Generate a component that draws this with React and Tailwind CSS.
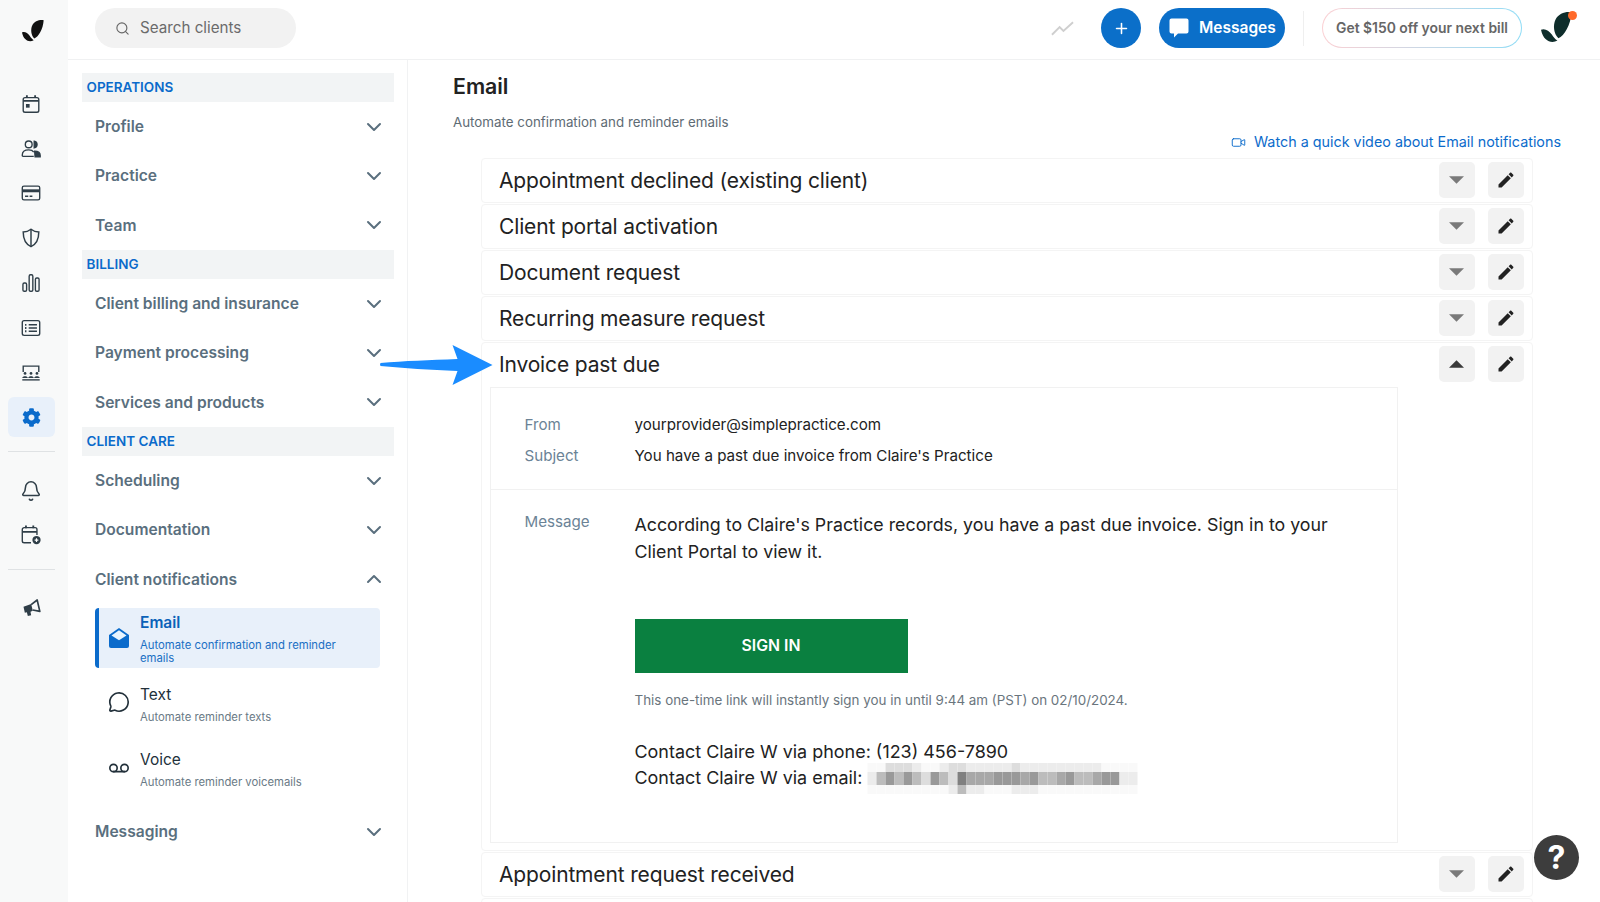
import React from "react";
import { ChevronDown, ChevronUp, Search, Bell, Video, MessageCircle, Voicemail, Plus } from "lucide-react";
import { FaCog } from "react-icons/fa";

const Logo = ({ className, fill = "#111" }) => (
  <svg viewBox="25 20 66 68" className={className}>
    <path fill={fill} d="M90 23C80 20 62 25 56 38C50 50 52 68 62 78C75 72 88 50 90 23Z" />
    <path fill={fill} d="M25 60C33 56 42 62 48 70C52 76 55 80 60 83C48 90 30 85 25 60Z" />
  </svg>
);

const ic = "w-[22px] h-[22px] text-[#2f3e48]";
const RailIcons = {
  cal: (
    <svg viewBox="0 0 24 24" className={ic} fill="none" stroke="currentColor" strokeWidth="1.5">
      <rect x="3.5" y="5" width="17" height="16" rx="2" />
      <path d="M3.5 8.5h17M7.5 2.5v3M16.5 2.5v3" strokeWidth="2" />
      <rect x="6.5" y="12" width="4" height="4" fill="currentColor" stroke="none" />
    </svg>
  ),
  people: (
    <svg viewBox="0 0 24 24" className={ic} fill="none" stroke="currentColor" strokeWidth="1.5">
      <circle cx="9.5" cy="7" r="3.7" />
      <path d="M2.5 20v-1.5C2.500 15 5 13 9.500 13c2.500 0 4.500.8 5.500 2.300M2.500 20H15" />
      <path d="M15.500 3.500a3.700 3.700 0 0 1 0 7.300z" fill="currentColor" />
      <path d="M16 14.500c3.500 0 6 1.500 6 4.500v1.500h-5.500z" fill="currentColor" />
    </svg>
  ),
  card: (
    <svg viewBox="0 0 24 24" className={ic} fill="none" stroke="currentColor" strokeWidth="1.5">
      <rect x="2.500" y="4.500" width="19" height="15" rx="1.800" />
      <rect x="3" y="8" width="18" height="3.200" fill="currentColor" stroke="none" />
      <path d="M5.500 15.500h3.500M10.500 15.500h3" />
    </svg>
  ),
  shield: (
    <svg viewBox="0 0 24 24" className={ic} fill="none" stroke="currentColor" strokeWidth="1.6">
      <path d="M12 2.500C9.500 4.500 6.500 5.500 3.500 5.500C3.500 13 5.500 18.500 12 21.500C18.500 18.500 20.500 13 20.500 5.500C17.500 5.500 14.500 4.500 12 2.500Z" />
      <path d="M12 3v18" />
    </svg>
  ),
  chart: (
    <svg viewBox="0 0 24 24" className={ic} fill="none" stroke="currentColor" strokeWidth="1.5">
      <rect x="3.200" y="12" width="4" height="9" rx="1.500" />
      <rect x="10" y="3" width="4" height="18" rx="1.500" />
      <rect x="16.800" y="6.500" width="4" height="14.500" rx="1.500" />
    </svg>
  ),
  list: (
    <svg viewBox="0 0 24 24" className={ic} fill="none" stroke="currentColor" strokeWidth="1.5">
      <rect x="2.500" y="4" width="19" height="16" rx="2" />
      <path d="M9.500 8.500h9M9.500 12h9M9.500 15.500h9" />
      <path d="M5.500 8.500h1.500M5.500 12h1.500M5.500 15.500h1.500" strokeWidth="2" />
    </svg>
  ),
  room: (
    <svg viewBox="0 0 24 24" className={ic} fill="none" stroke="currentColor" strokeWidth="1.5">
      <path d="M3.500 11V4.500h17V11" />
      <circle cx="5.500" cy="12.500" r="1.500" fill="currentColor" stroke="none" />
      <circle cx="12" cy="12.500" r="1.500" fill="currentColor" stroke="none" />
      <circle cx="18.500" cy="12.500" r="1.500" fill="currentColor" stroke="none" />
      <path d="M2.500 17.500c0-2.500 6-2.500 6 0zM9 17.500c0-2.500 6-2.500 6 0zM15.500 17.500c0-2.500 6-2.500 6 0z" fill="currentColor" stroke="none" />
      <path d="M2.500 19.500h19" />
    </svg>
  ),
  bell: <Bell className={ic} strokeWidth={1.7} />,
  calplus: (
    <svg viewBox="0 0 24 24" className={ic} fill="none" stroke="currentColor" strokeWidth="1.5">
      <path d="M12 20.500H4.500a2 2 0 0 1-2-2V6a2 2 0 0 1 2-2h12a2 2 0 0 1 2 2v6" />
      <path d="M2.500 8.500h16M6.500 1.500v3M14.500 1.500v3" strokeWidth="2" />
      <circle cx="18" cy="17.500" r="4.500" fill="currentColor" stroke="none" />
      <path d="M18 15.500v4M16 17.500h4" stroke="#fff" strokeWidth="1.300" />
    </svg>
  ),
};

const Rail = () => {
  const Item = ({ k, mt }) => (
    <div className="flex items-center justify-center h-[40px] w-[47px]" style={{ marginTop: mt }}>
      {RailIcons[k]}
    </div>
  );
  return (
    <aside className="w-[68px] shrink-0 bg-[#f8f9f9] flex flex-col items-center h-full pr-[6px]">
      <Logo className="w-[22px] h-[23px] mt-[19px] ml-[4px]" />
      <Item k="cal" mt={42} />
      <Item k="people" mt={5} />
      <Item k="card" mt={4} />
      <Item k="shield" mt={5} />
      <Item k="chart" mt={5} />
      <Item k="list" mt={5} />
      <Item k="room" mt={5} />
      <div className="mt-[4px] w-[47px] h-[40px] rounded-md bg-[#e8f0fa] flex items-center justify-center">
        <FaCog className="w-[19px] h-[19px] text-[#0b6bcb]" />
      </div>
      <div className="mt-[14px] w-[47px] h-px bg-[#dfe2e4]" />
      <Item k="bell" mt={19} />
      <Item k="calplus" mt={4} />
      <div className="mt-[14px] w-[47px] h-px bg-[#dfe2e4]" />
      <div className="mt-[18px] h-[40px] flex items-center">
        <svg viewBox="20 24 62 60" className="w-[21px] h-[20px]">
          <path fill="#2f3e48" d="M27 50L50 42L55 62L48 65L50 76L40 78L37 67L31 68Z" />
          <path fill="none" stroke="#2f3e48" strokeWidth="5" strokeLinejoin="round" d="M50 44L68 30L76 64L55 60" />
        </svg>
      </div>
    </aside>
  );
};

const TopBar = () => (
  <header className="h-[60px] shrink-0 border-b border-[#f0f1f2] flex items-center pl-[27px] pr-[23px] pb-[3px] bg-white">
    <div className="w-[201px] h-[40px] rounded-full bg-[#f2f2f2] flex items-center pl-[20px]">
      <Search className="w-[15px] h-[15px] text-[#666]" strokeWidth={1.8} />
      <span className="ml-[10px] text-[15.2px] text-[#6b6b6b]">Search clients</span>
    </div>
    <div className="ml-auto flex items-center">
      <svg viewBox="0 0 24 15" className="w-[23px] h-[15px] mr-[27px]" fill="none" stroke="#cfcfcf" strokeWidth="2">
        <path d="M1 14L9 6L13 10L23 1" />
      </svg>
      <div className="w-[40px] h-[40px] rounded-full bg-[#0b6fc9] flex items-center justify-center">
        <Plus className="w-[17px] h-[17px] text-white" strokeWidth={2.2} />
      </div>
      <div className="ml-[18px] w-[126px] h-[40px] rounded-full bg-[#0b6fc9] flex items-center pl-[10px]">
        <svg viewBox="0 0 20 20" className="w-[20px] h-[20px]" fill="#fff">
          <path d="M2.500 0.500h15a2 2 0 0 1 2 2v11a2 2 0 0 1-2 2H9l-4 4v-4H2.500a2 2 0 0 1-2-2v-11a2 2 0 0 1 2-2z" />
        </svg>
        <span className="ml-[10px] text-[15.5px] font-semibold text-white">Messages</span>
      </div>
      <div className="ml-[18px] w-px h-[35px] bg-[#efefef]" />
      <div className="ml-[18px] w-[200px] h-[40px] rounded-full p-px bg-gradient-to-r from-[#fbd0d3] to-[#8edcf6]">
        <div className="w-full h-full rounded-full bg-white flex items-center justify-center text-[13.9px] font-semibold text-[#666]">
          Get $150 off your next bill
        </div>
      </div>
      <div className="relative ml-[19px] w-[36px] h-[34px]">
        <Logo className="w-[31px] h-[32px]" fill="#0f2e2c" />
        <span className="absolute top-0 right-0 w-[9px] h-[9px] rounded-full bg-[#ff6a2b]" />
      </div>
    </div>
  </header>
);

const NavRow = ({ label, open }) => (
  <div className="h-[49.33px] pl-[13px] pr-[8px] flex items-center justify-between">
    <span className="text-[15.6px] font-semibold text-[#5a6f7e]">{label}</span>
    {open ? (
      <ChevronUp className="w-[24px] h-[24px] text-[#5a6f7e]" strokeWidth={2} />
    ) : (
      <ChevronDown className="w-[24px] h-[24px] text-[#5a6f7e]" strokeWidth={2} />
    )}
  </div>
);

const SectionHead = ({ children }) => (
  <div className="h-[29px] bg-[#f2f4f5] pl-[4.5px] flex items-center text-[13.5px] font-semibold text-[#0b6bcb]">
    {children}
  </div>
);

const Sidebar = () => (
  <nav className="w-[340px] shrink-0 border-r border-[#f1f2f3] pt-[13px] pl-[14px] pr-[13px] h-full">
    <SectionHead>OPERATIONS</SectionHead>
    <NavRow label="Profile" />
    <NavRow label="Practice" />
    <NavRow label="Team" />
    <SectionHead>BILLING</SectionHead>
    <NavRow label="Client billing and insurance" />
    <NavRow label="Payment processing" />
    <NavRow label="Services and products" />
    <SectionHead>CLIENT CARE</SectionHead>
    <NavRow label="Scheduling" />
    <NavRow label="Documentation" />
    <NavRow label="Client notifications" open />
    <div className="mt-[4px] ml-[13px] mr-[14px]">
      <div className="h-[60px] rounded-[4px] border-l-[4px] border-[#0b6bcb] bg-[#e8f0fa] flex">
        <div className="w-[41px] shrink-0 pl-[10px] pt-[20px]">
          <svg viewBox="0 0 20 20" className="w-[20px] h-[20px]">
            <path fill="#0b6bcb" d="M10 0L20 7V18a2 2 0 0 1-2 2H2a2 2 0 0 1-2-2V7Z" />
            <path fill="#e8f5ff" d="M2.500 7.600L10 2.300L17.500 7.600L10 12.300Z" />
          </svg>
        </div>
        <div className="pt-[5px] pr-[20px]">
          <div className="text-[15.5px] leading-[20px] font-semibold text-[#0b62b8]">Email</div>
          <div className="mt-[6px] text-[11.3px] leading-[13.5px] text-[#1a6fc4]">
            Automate confirmation and reminder emails
          </div>
        </div>
      </div>
      <div className="mt-[6px] h-[65px] flex">
        <div className="w-[45px] shrink-0 pl-[13px] pt-[17px]">
          <MessageCircle className="w-[22px] h-[22px] text-[#22303a]" strokeWidth={1.8} />
        </div>
        <div className="pt-[11px]">
          <div className="text-[15.5px] leading-[20px] text-[#22303a]">Text</div>
          <div className="mt-[6px] text-[11.3px] leading-[13.5px] text-[#6a7a86]">Automate reminder texts</div>
        </div>
      </div>
      <div className="h-[65px] flex">
        <div className="w-[45px] shrink-0 pl-[13px] pt-[18px]">
          <Voicemail className="w-[22px] h-[22px] text-[#22303a]" strokeWidth={1.8} />
        </div>
        <div className="pt-[11px]">
          <div className="text-[15.5px] leading-[20px] text-[#22303a]">Voice</div>
          <div className="mt-[6px] text-[11.3px] leading-[13.5px] text-[#6a7a86]">Automate reminder voicemails</div>
        </div>
      </div>
    </div>
    <div className="mt-[3px]">
      <NavRow label="Messaging" />
    </div>
  </nav>
);

const Btns = ({ up }) => (
  <div className="flex items-center gap-[13px] mb-[2px]">
    <div className="w-[36px] h-[36px] rounded-[5px] bg-[#f2f2f2] flex items-center justify-center">
      <svg viewBox="0 0 16 8" className="w-[15px] h-[8px]" fill={up ? "#3a3a3a" : "#7a7a7a"}>
        <path d={up ? "M0 8L8 0L16 8Z" : "M0 0L8 8L16 0Z"} />
      </svg>
    </div>
    <div className="w-[36px] h-[36px] rounded-[5px] bg-[#f2f2f2] flex items-center justify-center">
      <svg viewBox="0 0 24 24" className="w-[20px] h-[20px]" fill="#222">
        <path d="M3 17.250V21h3.750L17.810 9.940l-3.750-3.750L3 17.250zM20.710 7.040c.39-.39.39-1.020 0-1.410l-2.340-2.340c-.39-.39-1.020-.39-1.410 0l-1.830 1.830 3.750 3.750 1.830-1.830z" />
      </svg>
    </div>
  </div>
);

const RowHead = ({ title, up }) => (
  <div className="h-[44px] pl-[17px] pr-[8.5px] flex items-center justify-between">
    <span className="text-[21px] tracking-[-0.15px] text-[#222]">{title}</span>
    <Btns up={up} />
  </div>
);

const Row = ({ title }) => (
  <div className="h-[45px] mb-px rounded-[4px] border border-[#f4f4f4]">
    <RowHead title={title} />
  </div>
);

const mosaic = [
  [0, 0, 2, 2, 2, 1, 0, 0, 1, 2, 2, 1, 1, 1, 1, 1, 2, 1, 1, 1, 1, 1, 1, 1, 1, 1, 0, 0, 0, 0],
  [1, 3, 5, 3, 5, 3, 2, 5, 3, 2, 7, 4, 4, 4, 5, 5, 5, 4, 5, 3, 3, 4, 5, 3, 3, 4, 5, 5, 1, 1],
  [0, 0, 0, 0, 0, 0, 0, 0, 0, 1, 3, 1, 1, 0, 0, 0, 1, 1, 1, 0, 0, 0, 0, 0, 0, 0, 0, 0, 0, 0],
];
const shades = ["#f9f9f9", "#ececec", "#dddddd", "#bcbcbc", "#a8a8a8", "#999999", "#8c8c8c", "#808080"];

const Blur = () => (
  <svg width="275" height="31" viewBox="0 0 270 31" className="ml-[3px] shrink-0">
    {mosaic.map((r, y) =>
      r.map((c, x) => (
        <rect key={x + "-" + y} x={x * 9} y={[0, 9, 22][y]} width="9" height={[9, 13, 9][y]} fill={shades[c]} />
      ))
    )}
  </svg>
);

const Expanded = () => (
  <div className="h-[509px] mb-px rounded-[4px] border border-[#f4f4f4]">
    <RowHead title="Invoice past due" up />
    <div className="ml-[8px] w-[908px] h-[456px] border border-[#f1f1f1]">
      <div className="h-[102px] border-b border-[#f1f1f1] pt-[21.5px] pl-[33.5px]">
        <div className="h-[31px] flex items-center text-[15.15px]">
          <span className="w-[110px] text-[#6b8396]">From</span>
          <span className="text-[#222]">yourprovider@simplepractice.com</span>
        </div>
        <div className="h-[31px] flex items-center text-[15.15px]">
          <span className="w-[110px] text-[#6b8396]">Subject</span>
          <span className="text-[#222]">You have a past due invoice from Claire's Practice</span>
        </div>
      </div>
      <div className="flex pl-[33.5px]">
        <div className="w-[110px] shrink-0 pt-[22px] text-[15.15px] leading-[20px] text-[#6b8396]">Message</div>
        <div className="pt-[22px] w-[720px]">
          <p className="text-[17.8px] leading-[26.500px] text-[#222]">
            According to Claire's Practice records, you have a past due invoice. Sign in to your Client Portal to view it.
          </p>
          <div className="mt-[54px] w-[273px] h-[54px] bg-[#0a8040] flex items-center justify-center text-[15.8px] font-semibold text-white">
            SIGN IN
          </div>
          <p className="mt-[17px] text-[13.4px] leading-[20px] text-[#6a757d]">
            This one-time link will instantly sign you in until 9:44 am (PST) on 02/10/2024.
          </p>
          <p className="mt-[28px] text-[17.95px] leading-[27px] text-[#222]">Contact Claire W via phone: (123) 456-7890</p>
          <div className="flex items-center h-[27px] text-[17.95px] text-[#222]">
            Contact Claire W via email:
            <Blur />
          </div>
        </div>
      </div>
    </div>
  </div>
);

const Main = () => (
  <main className="flex-1 min-w-0 h-full pt-[11px] pl-[45px] pr-[39px]">
    <h1 className="text-[21.3px] leading-[30px] font-semibold text-[#222]">Email</h1>
    <p className="mt-[11px] text-[13.35px] leading-[20px] text-[#5e6b74]">Automate confirmation and reminder emails</p>
    <div className="flex justify-end items-center text-[14.35px] leading-[20px] text-[#0b6bcb]">
      <Video className="w-[15px] h-[15px] mr-[8px]" strokeWidth={1.5} />
      Watch a quick video about Email notifications
    </div>
    <div className="relative mt-[6px] ml-[28px] w-[1052px]">
      <Row title="Appointment declined (existing client)" />
      <Row title="Client portal activation" />
      <Row title="Document request" />
      <Row title="Recurring measure request" />
      <Expanded />
      <Row title="Appointment request received" />
      <Row title="" />
      <svg viewBox="0 0 113 40" className="absolute left-[-102px] top-[187px] w-[114px] h-[40px]">
        <path fill="#1a8cff" d="M113 20L73 0L78 14C50 15 25 16 1 18Q0 19.500 1 21C25 23 50 25 78 26L73 40Z" />
      </svg>
    </div>
  </main>
);

export default function App() {
  return (
    <div className="relative flex h-[902px] w-[1600px] overflow-hidden bg-white font-['Inter',sans-serif]">
      <Rail />
      <div className="flex-1 min-w-0 flex flex-col h-full">
        <TopBar />
        <div className="flex flex-1 min-h-0">
          <Sidebar />
          <Main />
        </div>
      </div>
      <div className="absolute left-[1534px] top-[835px] w-[45px] h-[45px] rounded-full bg-[#3d3d3d] flex items-center justify-center text-[32px] font-bold text-white">
        ?
      </div>
    </div>
  );
}
